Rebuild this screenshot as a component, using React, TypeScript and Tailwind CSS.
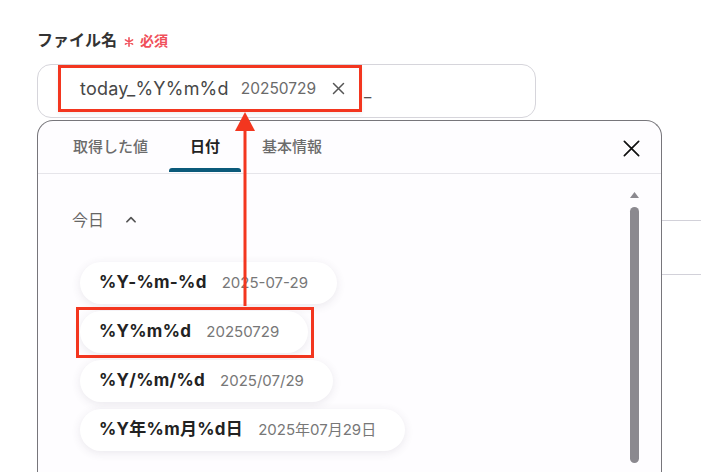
import React from 'react';

const items = [
  { code: '%Y-%m-%d', value: '2025-07-29' },
  { code: '%Y%m%d', value: '20250729', marked: true },
  { code: '%Y/%m/%d', value: '2025/07/29' },
  { code: '%Y年%m月%d日', value: '2025年07月29日' },
];

const tabs = ['取得した値', '日付', '基本情報'];

const App: React.FC = () => {
  return (
    <div
      className="relative h-[472px] w-full overflow-hidden bg-white"
      style={{ fontFamily: 'Inter, "Noto Sans CJK JP", sans-serif' }}
    >
      <div className="pl-[37px] pt-[30px]">
        {/* Label */}
        <div className="flex items-center h-[20px]">
          <span className="text-[16px] font-bold text-[#333]">ファイル名</span>
          <svg className="ml-[7px] mt-[3px] w-[10px] h-[10px]" viewBox="0 0 10 10" stroke="#f0505a" strokeWidth="1.6" strokeLinecap="round">
            <path d="M5 0.8v8.4M1.4 2.9l7.2 4.2M8.6 2.9L1.4 7.1" />
          </svg>
          <span className="ml-[6px] text-[14px] font-bold text-[#f0505a]">必須</span>
        </div>

        {/* Input */}
        <div className="mt-[14px] w-[499px] h-[54px] rounded-[14px] border border-[#d6d5db] flex items-start pl-[20px]">
          <div className="h-[47px] w-[304px] border-[3px] border-[#f3361f] bg-white flex items-center pl-[19px] shadow-[0_2px_4px_rgba(0,0,0,0.06)]">
            <span className="text-[18px] text-[#474747] tracking-[0.2px]">today_%Y%m%d</span>
            <span className="ml-[12px] text-[15.5px] text-[#6a6a6a]">20250729</span>
            <svg className="ml-[15px] w-[15px] h-[15px]" viewBox="0 0 24 24" fill="none" stroke="#555" strokeWidth="2.4" strokeLinecap="round">
              <path d="M4 4l16 16M20 4L4 20" />
            </svg>
          </div>
          <span className="ml-[2px] mt-[14px] text-[16px] text-[#555]">_</span>
        </div>

        {/* Panel row */}
        <div className="mt-[2px] flex">
          <div className="w-[625px] h-[352px] shrink-0 rounded-t-[16px] border border-b-0 border-[#77767b] bg-[#fefdff] flex flex-col overflow-hidden">
            {/* Tabs */}
            <div className="h-[53px] border-b border-[#e6e5ea] flex items-stretch pl-[14px]">
              {tabs.map((t, i) => (
                <div key={t} className="flex flex-col px-[21px]">
                  <div
                    className={
                      'flex-1 flex items-center pt-[6px] text-[15px] ' +
                      (i === 1 ? 'font-bold text-[#222]' : 'font-medium text-[#6b6b6b]')
                    }
                  >
                    {t}
                  </div>
                  <div className={'h-[4px] mb-[1px] -mx-[21px] rounded-t-[3px] ' + (i === 1 ? 'bg-[#0b5a7a]' : 'bg-transparent')} />
                </div>
              ))}
              <div className="ml-auto mr-[20px] flex items-center pt-[2px]">
                <svg className="w-[19px] h-[19px]" viewBox="0 0 24 24" fill="none" stroke="#111" strokeWidth="2.2" strokeLinecap="round">
                  <path d="M3 3l18 18M21 3L3 21" />
                </svg>
              </div>
            </div>

            {/* Content */}
            <div className="flex flex-1">
              <div className="flex-1 pl-[34px] pt-[36px]">
                <div className="flex items-center h-[20px]">
                  <span className="text-[16px] text-[#666]">今日</span>
                  <svg className="ml-[20px] w-[14px] h-[14px]" viewBox="0 0 24 24" fill="none" stroke="#555" strokeWidth="3" strokeLinecap="round" strokeLinejoin="round">
                    <path d="M5 15l7-7 7 7" />
                  </svg>
                </div>
                <div className="mt-[32px] pl-[8px] flex flex-col items-start gap-[7px]">
                  {items.map(it => (
                    <div key={it.code} className="relative">
                      <div className="h-[42px] rounded-full bg-white flex items-center pl-[19px] pr-[29px] shadow-[0_2px_10px_rgba(60,50,80,0.10)]">
                        <span className="text-[17px] font-bold text-[#222] tracking-[0.3px]">{it.code}</span>
                        <span className="ml-[15px] text-[15px] text-[#777]">{it.value}</span>
                      </div>
                      {it.marked && (
                        <div className="absolute -left-[4px] -right-[6px] -top-[4px] -bottom-[5px] border-[3px] border-[#f3361f] pointer-events-none" />
                      )}
                    </div>
                  ))}
                </div>
              </div>
              {/* Scrollbar */}
              <div className="w-[9px] mr-[22px] pt-[18px] flex flex-col items-center">
                <svg className="w-[9px] h-[6px]" viewBox="0 0 9 6">
                  <path d="M4.5 0L9 6H0z" fill="#8b898f" />
                </svg>
                <div className="mt-[9px] w-[9px] h-[256px] rounded-full bg-[#8b898f]" />
              </div>
            </div>
          </div>

          {/* Background field behind the panel */}
          <div className="flex-1 mt-[100px] h-[55px] border-y border-[#d2d1d9]" />
        </div>
      </div>

      {/* Annotation arrow */}
      <svg className="absolute left-0 top-0 pointer-events-none" width="701" height="472">
        <rect x="243.5" y="125" width="3" height="181" fill="#f3361f" />
        <path d="M245 112L255 131H235Z" fill="#f3361f" />
      </svg>
    </div>
  );
};

export default App;
